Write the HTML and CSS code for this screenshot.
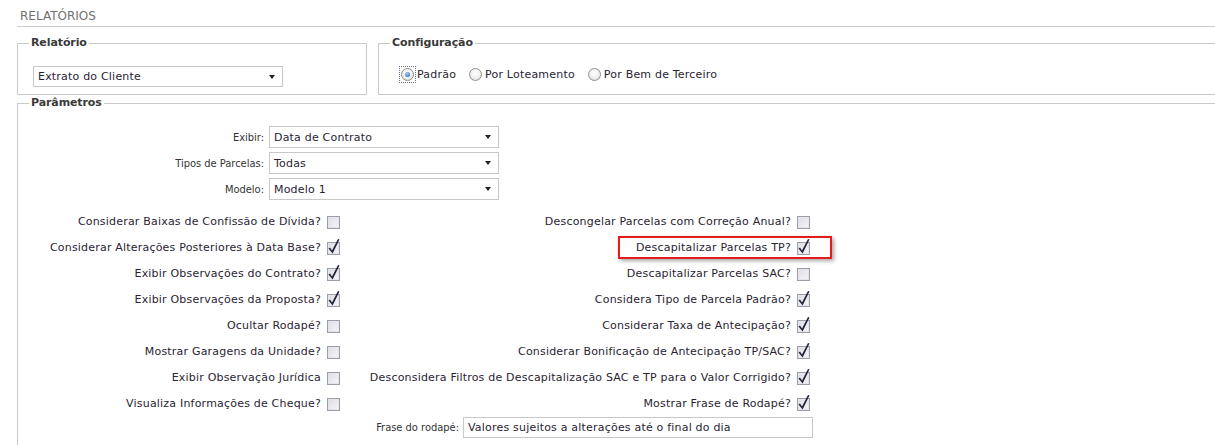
FILE: index.html
```html
<!DOCTYPE html>
<html lang="pt-BR">
<head>
  <meta charset="UTF-8">
  <title>Relatórios</title>
  <link rel="stylesheet" href="styles.css">
</head>
<body>
<div class="page">
  <div class="page-title">RELATÓRIOS</div>

  <div class="top-row">
    <fieldset class="box box-report">
      <legend>Relatório</legend>
      <div class="sel sel-report"><span>Extrato do Cliente</span><i class="arrow"></i></div>
    </fieldset>
    <fieldset class="box box-config">
      <legend>Configuração</legend>
      <div class="radios">
        <label class="radio"><span class="rb-wrap focus"><span class="rb on"></span></span>Padrão</label>
        <label class="radio"><span class="rb-wrap"><span class="rb"></span></span>Por Loteamento</label>
        <label class="radio"><span class="rb-wrap"><span class="rb"></span></span>Por Bem de Terceiro</label>
      </div>
    </fieldset>
  </div>

  <fieldset class="box box-params">
    <legend>Parâmetros</legend>
    <div class="field-grid">
      <label>Exibir:</label>
      <div class="sel"><span>Data de Contrato</span><i class="arrow"></i></div>
      <label>Tipos de Parcelas:</label>
      <div class="sel"><span>Todas</span><i class="arrow"></i></div>
      <label>Modelo:</label>
      <div class="sel"><span>Modelo 1</span><i class="arrow"></i></div>
    </div>

    <div class="checks">
      <div class="cell l"><span class="opt">Considerar Baixas de Confissão de Dívida? <span class="cb"></span></span></div>
      <div class="cell r"><span class="opt">Descongelar Parcelas com Correção Anual? <span class="cb"></span></span></div>

      <div class="cell l"><span class="opt">Considerar Alterações Posteriores à Data Base? <span class="cb"><svg class="tick" viewBox="0 0 13 13"><path d="M1.5 6.5 3 5.6 5 8.6 11-3 12.5-2.5 5.6 11.5Z"/></svg></span></span></div>
      <div class="cell r"><span class="opt hl">Descapitalizar Parcelas TP? <span class="cb"><svg class="tick" viewBox="0 0 13 13"><path d="M1.5 6.5 3 5.6 5 8.6 11-3 12.5-2.5 5.6 11.5Z"/></svg></span></span></div>

      <div class="cell l"><span class="opt">Exibir Observações do Contrato? <span class="cb"><svg class="tick" viewBox="0 0 13 13"><path d="M1.5 6.5 3 5.6 5 8.6 11-3 12.5-2.5 5.6 11.5Z"/></svg></span></span></div>
      <div class="cell r"><span class="opt">Descapitalizar Parcelas SAC? <span class="cb"></span></span></div>

      <div class="cell l"><span class="opt">Exibir Observações da Proposta? <span class="cb"><svg class="tick" viewBox="0 0 13 13"><path d="M1.5 6.5 3 5.6 5 8.6 11-3 12.5-2.5 5.6 11.5Z"/></svg></span></span></div>
      <div class="cell r"><span class="opt">Considera Tipo de Parcela Padrão? <span class="cb"><svg class="tick" viewBox="0 0 13 13"><path d="M1.5 6.5 3 5.6 5 8.6 11-3 12.5-2.5 5.6 11.5Z"/></svg></span></span></div>

      <div class="cell l"><span class="opt">Ocultar Rodapé? <span class="cb"></span></span></div>
      <div class="cell r"><span class="opt">Considerar Taxa de Antecipação? <span class="cb"><svg class="tick" viewBox="0 0 13 13"><path d="M1.5 6.5 3 5.6 5 8.6 11-3 12.5-2.5 5.6 11.5Z"/></svg></span></span></div>

      <div class="cell l"><span class="opt">Mostrar Garagens da Unidade? <span class="cb"></span></span></div>
      <div class="cell r"><span class="opt">Considerar Bonificação de Antecipação TP/SAC? <span class="cb"><svg class="tick" viewBox="0 0 13 13"><path d="M1.5 6.5 3 5.6 5 8.6 11-3 12.5-2.5 5.6 11.5Z"/></svg></span></span></div>

      <div class="cell l"><span class="opt">Exibir Observação Jurídica <span class="cb"></span></span></div>
      <div class="cell r"><span class="opt">Desconsidera Filtros de Descapitalização SAC e TP para o Valor Corrigido? <span class="cb"><svg class="tick" viewBox="0 0 13 13"><path d="M1.5 6.5 3 5.6 5 8.6 11-3 12.5-2.5 5.6 11.5Z"/></svg></span></span></div>

      <div class="cell l"><span class="opt">Visualiza Informações de Cheque? <span class="cb"></span></span></div>
      <div class="cell r"><span class="opt">Mostrar Frase de Rodapé? <span class="cb"><svg class="tick" viewBox="0 0 13 13"><path d="M1.5 6.5 3 5.6 5 8.6 11-3 12.5-2.5 5.6 11.5Z"/></svg></span></span></div>

      <div class="cell l"></div>
      <div class="cell frase">
        <label>Frase do rodapé:</label>
        <div class="txt">Valores sujeitos a alterações até o final do dia</div>
      </div>
    </div>
  </fieldset>
</div>
</body>
</html>
```

FILE: styles.css
```css
html, body {
  margin: 0;
  overflow: hidden;
}
body {
  background: #fff;
  font-family: "DejaVu Sans", Verdana, sans-serif;
  font-size: 11px;
  letter-spacing: 0.2px;
  color: #2a2432;
}
.page {
  width: 1215px;
  box-sizing: border-box;
  padding-left: 17px;
}
.page-title {
  height: 27px;
  box-sizing: border-box;
  padding: 9px 0 0 3px;
  line-height: 14px;
  border-bottom: 1px solid #cfcfcf;
  font-size: 12px;
  letter-spacing: 0;
  color: #707070;
}
.top-row {
  display: flex;
  gap: 11px;
  margin-top: 9px;
  margin-right: -20px;
}
.box {
  margin: 0;
  min-width: 0;
  border: 1px solid #c9c9c9;
  padding: 0 11px 7px;
}
.box legend {
  padding: 0 2px;
  font-weight: bold;
  font-size: 11px;
  line-height: 14px;
  letter-spacing: -0.1px;
  color: #3a3a3a;
}
.box-report {
  width: 350px;
  box-sizing: border-box;
  padding-top: 16px;
}
.box-config {
  flex: 1;
  padding-top: 16px;
}
.box-params {
  margin-top: 1px;
  margin-right: -20px;
  padding: 16px 11px 40px;
}
.sel {
  display: flex;
  align-items: center;
  justify-content: space-between;
  height: 22px;
  box-sizing: border-box;
  border: 1px solid #c8c8c8;
  padding: 0 7px 0 4px;
  background: #fff;
}
.sel-report {
  width: 250px;
  height: 21px;
  margin-left: 4px;
}
.arrow {
  width: 0;
  height: 0;
  border-left: 3.5px solid transparent;
  border-right: 3.5px solid transparent;
  border-top: 4px solid #222;
}
.radios {
  display: flex;
  align-items: center;
  gap: 11px;
  height: 16px;
  margin-left: 9px;
}
.radio {
  display: flex;
  align-items: center;
  gap: 1px;
}
.rb-wrap {
  display: inline-block;
  padding: 1px;
  border: 1px dotted transparent;
}
.rb-wrap.focus {
  border-color: #6c6cc0;
}
.rb {
  display: block;
  position: relative;
  width: 13px;
  height: 13px;
  box-sizing: border-box;
  border: 1px solid #8f9191;
  border-radius: 50%;
  background: radial-gradient(circle at 50% 40%, #ffffff 0, #f2f2f2 45%, #d4d4d4 100%);
}
.rb.on:after {
  content: "";
  position: absolute;
  left: 3px;
  top: 3px;
  width: 5px;
  height: 5px;
  border-radius: 50%;
  background: radial-gradient(circle at 40% 35%, #b6d2f4 0, #4f84d0 60%, #2c5aa8 100%);
}
.field-grid {
  display: grid;
  grid-template-columns: 235px 230px;
  grid-auto-rows: 22px;
  column-gap: 5px;
  row-gap: 4px;
}
.field-grid label,
.frase label {
  justify-self: end;
  align-self: center;
  font-family: "DejaVu Sans Condensed", "DejaVu Sans", sans-serif;
  font-stretch: condensed;
  letter-spacing: 0;
  color: #333;
}
.checks {
  display: grid;
  grid-template-columns: 312px 472px;
  grid-auto-rows: 26px;
  margin-top: 9px;
}
.cell {
  display: flex;
  justify-content: flex-end;
  align-items: center;
}
.cell.l {
  padding-right: 1px;
}
.cell.r {
  padding-right: 3px;
}
.opt {
  display: inline-flex;
  align-items: center;
  gap: 6px;
  position: relative;
  white-space: nowrap;
  line-height: 14px;
}
.cb {
  display: inline-block;
  position: relative;
  width: 13px;
  height: 13px;
  box-sizing: border-box;
  border: 1px solid #9c9fa9;
  background: linear-gradient(135deg, #dcdce4 0, #f7f7f9 100%);
  box-shadow: inset 0 0 0 1px #e4e4ea;
}
.tick {
  position: absolute;
  left: -1px;
  top: -1px;
  width: 13px;
  height: 13px;
  overflow: visible;
  fill: #23233a;
}
.hl:before {
  content: "";
  position: absolute;
  left: -18px;
  right: -22px;
  top: -5px;
  bottom: -4px;
  border: 2px solid #e41b1b;
  box-shadow: 2px 2px 4px rgba(0, 0, 0, 0.35);
}
.frase {
  align-self: start;
  gap: 4px;
}
.txt {
  width: 350px;
  height: 21px;
  box-sizing: border-box;
  border: 1px solid #c8c8c8;
  padding-left: 4px;
  line-height: 19px;
  white-space: nowrap;
}
```
